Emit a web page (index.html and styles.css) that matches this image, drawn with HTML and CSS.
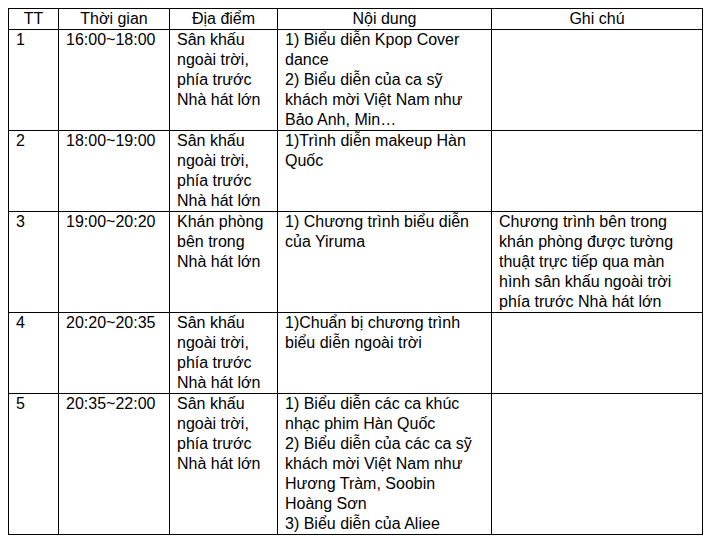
FILE: index.html
```html
<!DOCTYPE html>
<html lang="vi">
<head>
<meta charset="utf-8">
<title>Lịch trình</title>
<link rel="stylesheet" href="styles.css">
</head>
<body>
<table class="schedule">
  <colgroup>
    <col class="c-tt">
    <col class="c-time">
    <col class="c-place">
    <col class="c-content">
    <col class="c-note">
  </colgroup>
  <thead>
    <tr>
      <th>TT</th>
      <th>Thời gian</th>
      <th>Địa điểm</th>
      <th>Nội dung</th>
      <th>Ghi chú</th>
    </tr>
  </thead>
  <tbody>
    <tr>
      <td>1</td>
      <td>16:00~18:00</td>
      <td>Sân khấu ngoài trời, phía trước Nhà hát lớn</td>
      <td>1) Biểu diễn Kpop Cover dance<br>2) Biểu diễn của ca sỹ khách mời Việt Nam như Bảo Anh, Min…</td>
      <td></td>
    </tr>
    <tr>
      <td>2</td>
      <td>18:00~19:00</td>
      <td>Sân khấu ngoài trời, phía trước Nhà hát lớn</td>
      <td>1)Trình diễn makeup Hàn Quốc</td>
      <td></td>
    </tr>
    <tr>
      <td>3</td>
      <td>19:00~20:20</td>
      <td>Khán phòng bên trong Nhà hát lớn</td>
      <td>1) Chương trình biểu diễn của Yiruma</td>
      <td>Chương trình bên trong khán phòng được tường thuật trực tiếp qua màn hình sân khấu ngoài trời phía trước Nhà hát lớn</td>
    </tr>
    <tr>
      <td>4</td>
      <td>20:20~20:35</td>
      <td>Sân khấu ngoài trời, phía trước Nhà hát lớn</td>
      <td>1)Chuẩn bị chương trình biểu diễn ngoài trời</td>
      <td></td>
    </tr>
    <tr>
      <td>5</td>
      <td>20:35~22:00</td>
      <td>Sân khấu ngoài trời, phía trước Nhà hát lớn</td>
      <td>1) Biểu diễn các ca khúc nhạc phim Hàn Quốc<br>2) Biểu diễn của các ca sỹ khách mời Việt Nam như Hương Tràm, Soobin<br>Hoàng Sơn<br>3) Biểu diễn của Aliee</td>
      <td></td>
    </tr>
  </tbody>
</table>
</body>
</html>
```

FILE: styles.css
```css
html, body {
  margin: 0;
  background: #ffffff;
}
body {
  padding: 8px;
  font-family: "Liberation Sans", Arial, sans-serif;
  font-size: 16px;
  line-height: 20px;
  color: #000000;
}
.schedule {
  border-collapse: collapse;
  table-layout: fixed;
  width: 694px;
}
.schedule th,
.schedule td {
  border: 1px solid #000000;
  padding: 0 7px;
  vertical-align: top;
  text-align: left;
  font-weight: normal;
  line-height: 20px;
}
.schedule th {
  text-align: center;
}
.c-tt { width: 50px; }
.c-time { width: 111px; }
.c-place { width: 108px; }
.c-content { width: 214px; }
.c-note { width: 211px; }
```
